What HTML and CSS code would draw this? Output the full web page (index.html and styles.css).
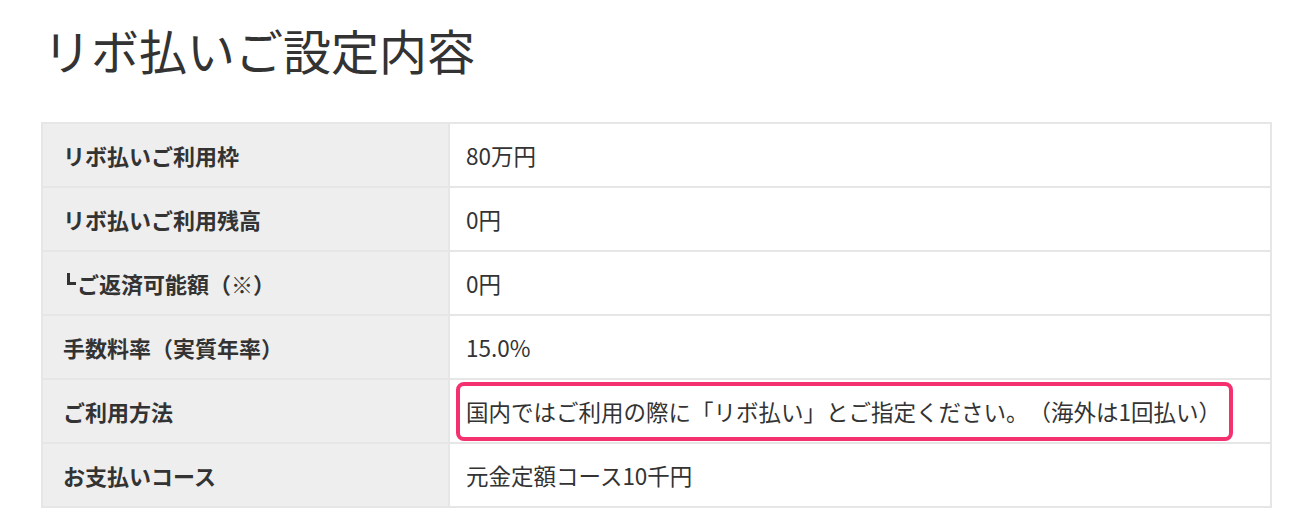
FILE: index.html
```html
<!DOCTYPE html>
<html lang="ja">
<head>
<meta charset="utf-8">
<link rel="stylesheet" href="styles.css">
</head>
<body>
<main class="page">
  <h1 class="title">リボ払いご設定内容</h1>
  <table class="settings">
    <tbody>
      <tr><th>リボ払いご利用枠</th><td>80万円</td></tr>
      <tr><th>リボ払いご利用残高</th><td>0円</td></tr>
      <tr><th class="sub"><span class="corner"></span>ご返済可能額（※）</th><td>0円</td></tr>
      <tr><th>手数料率（実質年率）</th><td>15.0%</td></tr>
      <tr><th>ご利用方法</th><td><span class="highlight">国内ではご利用の際に「リボ払い」とご指定ください。（海外は1回払い）</span></td></tr>
      <tr><th>お支払いコース</th><td>元金定額コース10千円</td></tr>
    </tbody>
  </table>
</main>
</body>
</html>
```
FILE: styles.css
```css
* { box-sizing: border-box; }
html, body { margin: 0; padding: 0; background: #ffffff; }
body {
  font-family: "Noto Sans CJK JP", "Noto Sans", sans-serif;
  color: #333333;
  text-spacing-trim: space-all;
}
.page {
  padding: 14px 28px 0 41px;
}
.title {
  margin: 0 0 38px 0;
  padding-left: 2px;
  font-size: 48px;
  font-weight: 400;
  line-height: 70px;
  color: #333333;
}
.settings {
  width: 1231px;
  border-collapse: collapse;
  border: 2px solid #e6e6e6;
}
.settings th,
.settings td {
  height: 64px;
  border-top: 2px solid #e6e6e6;
  line-height: 30px;
  vertical-align: middle;
  text-align: left;
}
.settings th {
  width: 407px;
  background: #eeeeee;
  font-size: 22px;
  font-weight: 700;
  padding: 0 0 0 20px;
  border-right: 2px solid #e6e6e6;
}
.settings td {
  background: #ffffff;
  font-size: 22.5px;
  font-weight: 400;
  padding: 0 0 0 16px;
}
.settings th.sub { padding-left: 24px; }
.corner {
  display: inline-block;
  width: 9px;
  height: 12px;
  border-left: 3px solid #333333;
  border-bottom: 3px solid #333333;
  vertical-align: 8px;
  margin-right: 1px;
}
.highlight {
  position: relative;
}
.highlight::after {
  content: "";
  position: absolute;
  left: -10px;
  right: -12px;
  top: -13px;
  bottom: -14px;
  border: 4px solid #f5306f;
  border-radius: 8px;
}
```
